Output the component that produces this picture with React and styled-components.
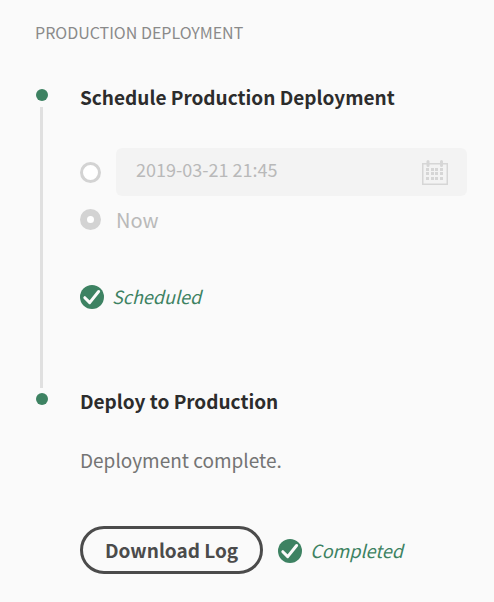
import React from "react";
import styled, { createGlobalStyle } from "styled-components";

const GlobalStyle = createGlobalStyle`
  *, *::before, *::after { box-sizing: border-box; }
  body {
    margin: 0;
    background: #fafafa;
    font-family: "Noto Sans CJK SC", "Noto Sans", sans-serif;
    font-size: 19px;
    line-height: 26px;
    color: #747474;
  }
`;

const Page = styled.main`
  padding: 20px 27px 28px 36px;
`;

const SectionTitle = styled.h1`
  margin: 0 0 40px -1px;
  font-size: 16px;
  line-height: 24px;
  font-weight: 400;
  color: #8a8a8a;
  text-transform: uppercase;
`;

const Steps = styled.ol`
  margin: 0;
  padding: 0;
  list-style: none;
`;

const Step = styled.li`
  display: flex;
  gap: 32px;
`;

const Track = styled.div`
  display: flex;
  flex-direction: column;
  flex: 0 0 12px;
  padding-top: 5px;
`;

const Dot = styled.span`
  height: 12px;
  border-radius: 50%;
  background: #3d8262;
`;

const Line = styled.span`
  flex: 1;
  width: 3px;
  margin: 6px 0 0 4px;
  background: #e0e0e0;
`;

const StepBody = styled.section`
  flex: 1;
  min-width: 0;
  padding-bottom: ${(p) => (p.$last ? 0 : 79)}px;
`;

const StepTitle = styled.h2`
  margin: 0;
  font-size: 19px;
  line-height: 26px;
  font-weight: 700;
  color: #2c2c2c;
`;

const Options = styled.fieldset`
  display: flex;
  flex-direction: column;
  gap: 12px;
  min-width: 0;
  margin: 38px 0 54px;
  padding: 0;
  border: 0;
`;

const Option = styled.div`
  display: flex;
  align-items: center;
  gap: 15px;
`;

const Radio = styled.input.attrs({ type: "radio" })`
  appearance: none;
  flex: none;
  width: 21px;
  height: 21px;
  margin: 0;
  border: 3px solid #d3d3d3;
  border-radius: 50%;
  background: #fff;

  &:checked { border-width: 7px; }
`;

const OptionLabel = styled.label`
  font-size: 20px;
  line-height: 23px;
  color: #b9b9b9;
`;

const Field = styled.div`
  display: flex;
  flex: 1;
  align-items: center;
  min-width: 0;
  height: 48px;
  padding: 0 19px 0 20px;
  border-radius: 6px;
  background: #f3f3f3;
`;

const DateInput = styled.input`
  flex: 1;
  min-width: 0;
  height: 48px;
  padding: 0 0 6px;
  border: 0;
  background: transparent;
  font: inherit;
  font-size: 18px;
  color: #b9b9b9;
`;

const StatusRow = styled.div`
  display: flex;
  align-items: flex-start;
  gap: 8px;
  padding-top: ${(p) => (p.$inline ? 2 : 0)}px;
  font-size: 18px;
  font-style: italic;
  line-height: 22px;
  color: #3d8262;

  svg { flex: none; }
`;

const Message = styled.p`
  margin: 33px 0 53px;
`;

const Actions = styled.div`
  display: flex;
  align-items: center;
  gap: 15px;
`;

const Button = styled.button`
  height: 48px;
  padding: 0 22px;
  border: 3px solid #4b4b4b;
  border-radius: 24px;
  background: transparent;
  font: inherit;
  font-weight: 700;
  color: #4b4b4b;
  white-space: nowrap;
`;

function CalendarIcon() {
  const columns = [4, 9, 13, 18];
  const rows = [9, 13, 18];
  return (
    <svg width="26" height="25" viewBox="0 0 26 25" aria-hidden="true">
      <rect x="0.75" y="3.75" width="24.5" height="20.5" fill="none" stroke="#d6d6d6" strokeWidth="1.5" />
      <path d="M6 1.5v4M19.5 1.5v4" stroke="#d6d6d6" strokeWidth="3" strokeLinecap="round" />
      {rows.map((y) =>
        columns.map((x) => (
          <rect key={x + "-" + y} x={x} y={y - 1} width="3" height="3" fill="#d6d6d6" />
        ))
      )}
    </svg>
  );
}

function Status({ children, inline }) {
  return (
    <StatusRow $inline={inline} role="status">
      <svg width="24" height="24" viewBox="0 0 24 24" aria-hidden="true">
        <circle cx="12" cy="12" r="12" fill="#3d8262" />
        <path
          d="M4.8 12.7 9.7 17.6 18.6 6.5"
          fill="none"
          stroke="#fafafa"
          strokeWidth="3"
          strokeLinecap="round"
          strokeLinejoin="round"
        />
      </svg>
      <span>{children}</span>
    </StatusRow>
  );
}

export default function App() {
  return (
    <>
      <GlobalStyle />
      <Page>
        <SectionTitle>Production Deployment</SectionTitle>
        <Steps>
          <Step>
            <Track>
              <Dot />
              <Line />
            </Track>
            <StepBody>
              <StepTitle>Schedule Production Deployment</StepTitle>
              <Options disabled>
                <Option>
                  <Radio name="schedule" aria-label="Scheduled date" />
                  <Field>
                    <DateInput
                      type="text"
                      aria-label="Deployment date and time"
                      defaultValue="2019-03-21 21:45"
                    />
                    <CalendarIcon />
                  </Field>
                </Option>
                <Option>
                  <Radio name="schedule" id="now" defaultChecked />
                  <OptionLabel htmlFor="now">Now</OptionLabel>
                </Option>
              </Options>
              <Status>Scheduled</Status>
            </StepBody>
          </Step>
          <Step>
            <Track>
              <Dot />
            </Track>
            <StepBody $last>
              <StepTitle>Deploy to Production</StepTitle>
              <Message>Deployment complete.</Message>
              <Actions>
                <Button type="button">Download Log</Button>
                <Status inline>Completed</Status>
              </Actions>
            </StepBody>
          </Step>
        </Steps>
      </Page>
    </>
  );
}
